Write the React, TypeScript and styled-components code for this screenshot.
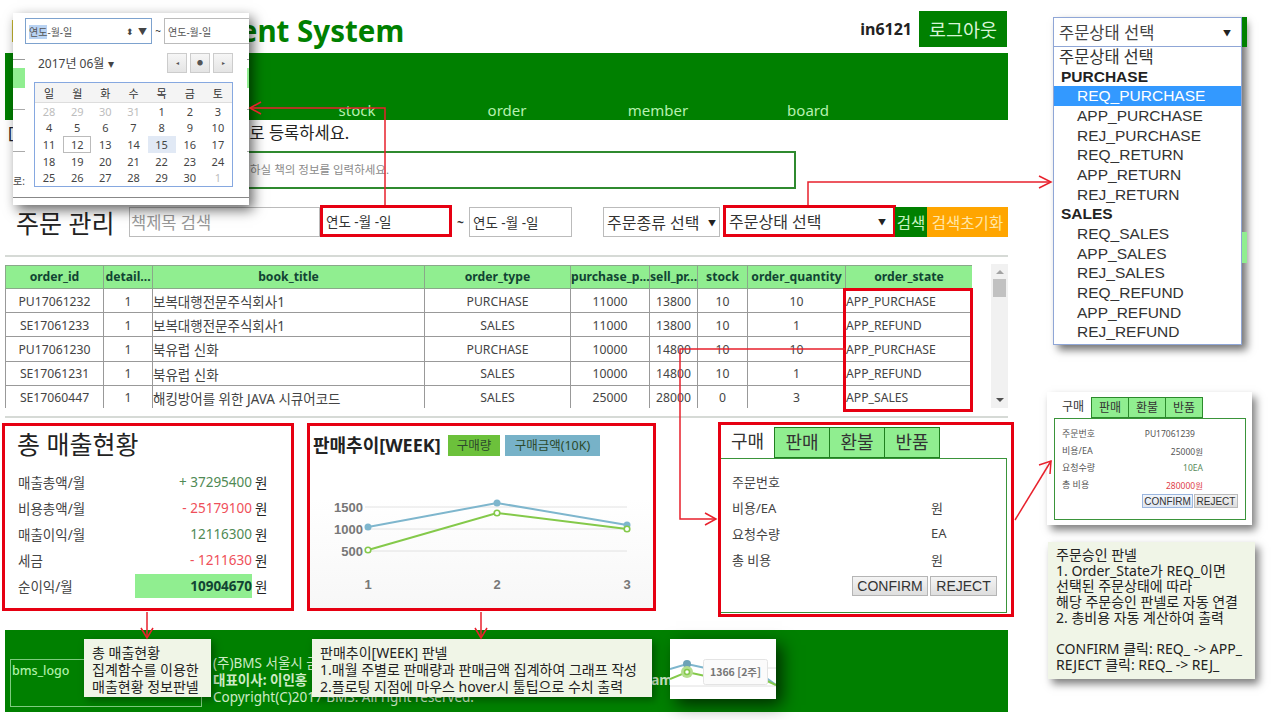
import styled, { createGlobalStyle } from 'styled-components';

const GlobalStyle = createGlobalStyle`
  html, body {
    margin: 0;
    padding: 0;
    background: #fff;
    font-family: "Noto Sans", "Noto Sans CJK KR", sans-serif;
    color: #333;
  }
  * { box-sizing: border-box; }
`;

const Page = styled.div`
  position: relative;
  width: 1280px;
  height: 720px;
  overflow: hidden;
`;

const Main = styled.div`
  width: 1003px;
  margin-left: 5px;
  display: flex;
  flex-direction: column;
`;

/* header */
const Header = styled.div`
  height: 53px;
  display: flex;
  align-items: center;
  justify-content: space-between;
  padding: 11px 1px 3px 5px;
`;
const Title = styled.h1`
  margin: 0;
  color: #008000;
  font-size: 29.5px;
  font-weight: 700;
  white-space: nowrap;
`;
const UserBox = styled.div`
  display: flex;
  align-items: center;
  gap: 7px;
  margin-top: -4px;
`;
const UserName = styled.span`
  font-size: 16px;
  font-weight: 700;
  color: #222;
`;
const LogoutButton = styled.button`
  width: 88px;
  height: 36px;
  border: 0;
  padding: 0;
  background: #008000;
  color: #d8f5d8;
  font: 18.5px "Noto Sans CJK KR", sans-serif;
`;

/* nav */
const Nav = styled.nav`
  height: 67px;
  background: #008000;
  display: grid;
  grid-template-columns: 282px 140px 160px 142px 158px;
  align-items: end;
`;
const NavItem = styled.a`
  justify-self: center;
  color: #b6f0b0;
  font-size: 15px;
  line-height: 18px;
  margin-bottom: 1px;
  &:first-child { grid-column: 2; }
`;

const Notice = styled.div`
  height: 31px;
  display: flex;
  padding-left: 3px;
  font-size: 16.5px;
  line-height: 26px;
  white-space: nowrap;
  color: #222;
`;
const NoticeTail = styled.span`
  margin-left: 236px;
`;
const BookInfoBox = styled.div`
  width: 781px;
  height: 38px;
  margin-left: 10px;
  border: 2px solid #2f8a2f;
  padding-left: 233px;
  font-size: 11.5px;
  line-height: 33px;
  color: #8a8a8a;
  white-space: nowrap;
`;

/* search */
const SearchRow = styled.div`
  display: flex;
  align-items: center;
  height: 30px;
  margin-top: 18px;
`;
const PageHeading = styled.h2`
  margin: 0;
  width: 124px;
  padding-left: 11px;
  font-size: 25px;
  font-weight: 400;
  color: #222;
  white-space: nowrap;
`;
const FieldBase = styled.div<{ $w: number; $highlight?: boolean; $ml?: number }>`
  width: ${p => p.$w}px;
  height: ${p => (p.$highlight ? 32 : 30)}px;
  margin-top: ${p => (p.$highlight ? -2 : 0)}px;
  margin-left: ${p => p.$ml ?? 0}px;
  border: ${p => (p.$highlight ? '3px solid #e60012' : '1px solid #bbb')};
  padding: 0 3px;
  display: flex;
  align-items: center;
  justify-content: space-between;
  font-size: 13.5px;
  white-space: nowrap;
  color: #333;
  flex-shrink: 0;
`;
const Placeholder = styled.span`
  margin-left: -2px;
  color: #999;
  font-size: 16.5px;
`;
const SelectText = styled.span`
  font-size: 16px;
  color: #333;
`;
const SelectCaret = styled.span<{ $pad: number }>`
  font-size: 8px;
  color: #222;
  padding-right: ${p => p.$pad}px;
`;
const Tilde = styled.span`
  width: 17px;
  text-align: center;
  font-size: 12px;
  font-weight: 700;
  flex-shrink: 0;
`;
const SearchButton = styled.button<{ $bg: string; $w: number; $fg: string; $ml?: number }>`
  width: ${p => p.$w}px;
  height: 30px;
  margin-left: ${p => p.$ml ?? 0}px;
  border: 0;
  padding: 0;
  background: ${p => p.$bg};
  color: ${p => p.$fg};
  font: 15.5px "Noto Sans CJK KR", sans-serif;
  white-space: nowrap;
  flex-shrink: 0;
`;

const Rule = styled.div<{ $top: number }>`
  height: 2px;
  margin-top: ${p => p.$top}px;
  background: #d6dad6;
`;

/* table */
const TableArea = styled.div`
  margin-top: 8px;
  display: flex;
  align-items: flex-start;
  height: 143px;
`;
const TableClip = styled.div`
  width: 968px;
  height: 143px;
  overflow: hidden;
`;
const OrderTable = styled.table`
  width: 967px;
  table-layout: fixed;
  border-collapse: collapse;
  font-size: 12px;
  color: #444;
`;
const HeadCell = styled.th`
  height: 23px;
  padding: 0 0 1px;
  background: #90ee90;
  border: 1px solid #8aa88a;
  font-size: 12.2px;
  font-weight: 700;
  color: #143;
  text-align: center;
  white-space: nowrap;
`;
const BodyCell = styled.td<{ $left?: boolean; $size: number }>`
  height: 24.2px;
  padding: 1px 0 0;
  border: 1px solid #999;
  font-size: ${p => p.$size}px;
  text-align: ${p => (p.$left ? 'left' : 'center')};
  white-space: nowrap;
  overflow: hidden;
`;
const Scrollbar = styled.div`
  width: 17px;
  height: 144px;
  margin-top: -1px;
  margin-left: 19px;
  background: #f1f1f1;
  display: flex;
  flex-direction: column;
  align-items: center;
`;
const ScrollArrow = styled.div<{ $down?: boolean }>`
  width: 0;
  height: 0;
  margin: ${p => (p.$down ? 'auto 0 6px' : '6px 0 5px')};
  border-left: 4px solid transparent;
  border-right: 4px solid transparent;
  ${p => (p.$down ? 'border-top: 4px solid #505050;' : 'border-bottom: 4px solid #a3a3a3;')}
`;
const ScrollThumb = styled.div`
  width: 13px;
  height: 18px;
  background: #c1c1c1;
`;

/* bottom panels */
const PanelRow = styled.div`
  display: flex;
  align-items: flex-start;
  margin: 5px 0 0 -3px;
`;
const Panel = styled.section<{ $w: number; $h: number; $ml?: number; $mt?: number }>`
  width: ${p => p.$w}px;
  height: ${p => p.$h}px;
  margin-left: ${p => p.$ml ?? 0}px;
  margin-top: ${p => p.$mt ?? 0}px;
  border: 3px solid #e60012;
  background: #fff;
  flex-shrink: 0;
`;
const SalesTitle = styled.h3`
  margin: 0 0 9px;
  height: 34px;
  padding-left: 12px;
  font-size: 25px;
  font-weight: 400;
  line-height: 36px;
  color: #222;
`;
const SalesRow = styled.div`
  display: grid;
  grid-template-columns: 117px 117px 1fr;
  height: 26px;
  padding-left: 13px;
  align-items: center;
  font-size: 13.5px;
  color: #444;
`;
const SalesValue = styled.span<{ $tone: string; $strong?: boolean }>`
  height: 24px;
  line-height: 24px;
  text-align: right;
  color: ${p => p.$tone};
  font-weight: ${p => (p.$strong ? 700 : 400)};
  background: ${p => (p.$strong ? '#90ee90' : 'transparent')};
`;
const WonUnit = styled.span`
  padding-left: 3px;
  color: #222;
`;

const TrendPanelBody = styled.div`
  height: 100%;
  background: linear-gradient(#fff 40%, #f7f7f7);
`;
const TrendHead = styled.div`
  height: 34px;
  padding: 9px 0 0 3px;
  display: flex;
  align-items: flex-start;
`;
const TrendTitle = styled.h3`
  margin: -3px 0 0;
  width: 135px;
  font-size: 18px;
  line-height: 26px;
  font-weight: 700;
  color: #222;
  white-space: nowrap;
`;
const LegendChip = styled.span<{ $bg: string; $w: number }>`
  width: ${p => p.$w}px;
  height: 21px;
  margin-right: 5px;
  background: ${p => p.$bg};
  font-size: 12.5px;
  line-height: 21px;
  text-align: center;
  color: #2d4a2d;
  white-space: nowrap;
`;
const ChartSvg = styled.svg`
  display: block;
`;

const TabBar = styled.div`
  display: flex;
  height: 31px;
  margin-top: 2px;
`;
const Tab = styled.div<{ $active?: boolean; $w: number }>`
  width: ${p => p.$w}px;
  text-align: center;
  font-size: 18px;
  line-height: 28px;
  color: #333;
  background: ${p => (p.$active ? '#fff' : '#90ee90')};
  border: ${p => (p.$active ? '0' : '1px solid #1f7f1f')};
  margin-left: ${p => (p.$active ? 0 : -1)}px;
  &:nth-child(2) { margin-left: 0; }
`;
const TabBody = styled.div`
  width: 286px;
  height: 155px;
  border: 1px solid #3a943a;
  border-left: 0;
  padding-top: 9px;
`;
const ApproveRow = styled.div`
  height: 26px;
  display: grid;
  grid-template-columns: 199px 1fr;
  padding-left: 11px;
  align-items: center;
  font-size: 13px;
  color: #444;
`;
const ButtonRow = styled.div`
  display: flex;
  justify-content: flex-end;
  gap: 2px;
  padding-right: 9px;
  margin-top: 4px;
`;
const GrayButton = styled.button<{ $w: number }>`
  width: ${p => p.$w}px;
  height: 20px;
  padding: 0;
  border: 1px solid #b5b5b5;
  background: linear-gradient(#f4f4f4, #dedede);
  color: #333;
  font: 14px "Liberation Sans", sans-serif;
`;

/* footer */
const Footer = styled.footer`
  margin-top: 13px;
  height: 82px;
  background: #008000;
  padding: 25px 0 0 5px;
  display: flex;
  gap: 11px;
  align-items: flex-start;
`;
const LogoBox = styled.div`
  width: 192px;
  height: 48px;
  margin-top: 4px;
  border: 1px solid #7fcb7f;
  padding-left: 1px;
  font-size: 12.5px;
  font-weight: 500;
  line-height: 22px;
  color: #aef0a8;
`;
const FooterInfo = styled.div`
  font-size: 13.5px;
  line-height: 17px;
  color: #cdebc6;
  white-space: nowrap;
`;
const FooterStrong = styled.span`
  font-weight: 700;
`;
const FooterGap = styled.span`
  margin-left: 344px;
  font-weight: 700;
`;

/* overlays */
const Connectors = styled.svg`
  position: absolute;
  inset: 0;
  z-index: 6;
  pointer-events: none;
`;
const StateHighlight = styled.div`
  position: absolute;
  left: 843px;
  top: 288px;
  width: 130px;
  height: 124px;
  border: 3px solid #e60012;
  z-index: 2;
`;

const CalendarPopup = styled.div`
  position: absolute;
  left: 13px;
  top: 13px;
  width: 236px;
  height: 192px;
  z-index: 5;
  overflow: hidden;
  box-shadow: 4px 5px 12px rgba(0, 0, 0, 0.6);
  background:
    linear-gradient(#9a9a9a, #9a9a9a) 0 46px / 100% 1px no-repeat,
    linear-gradient(#90ee90, #90ee90) 0 55px / 100% 20px no-repeat,
    linear-gradient(#aaa, #aaa) 0 96px / 100% 1px no-repeat,
    linear-gradient(#aaa, #aaa) 0 138px / 100% 1px no-repeat,
    linear-gradient(#888, #888) 0 184px / 100% 1px no-repeat,
    #fff;
`;
const FragmentText = styled.span`
  position: absolute;
  left: 0;
  top: 160px;
  font-size: 10px;
  color: #444;
`;
const CalendarDates = styled.div`
  position: relative;
  display: flex;
  align-items: center;
  margin: 5px 0 0 12px;
  height: 26px;
  width: 240px;
`;
const CalendarInput = styled.div<{ $focus?: boolean; $w: number }>`
  width: ${p => p.$w}px;
  height: 26px;
  background: #fff;
  border: 1px solid ${p => (p.$focus ? '#7da2ce' : '#bbb')};
  padding: 0 3px;
  display: flex;
  align-items: center;
  justify-content: space-between;
  font-size: 10px;
  color: #555;
  white-space: nowrap;
  flex-shrink: 0;
`;
const YearSelected = styled.span`
  background: #b9d3f3;
`;
const Spinner = styled.span`
  font-size: 9px;
  color: #444;
  letter-spacing: 1px;
`;
const CalendarTilde = styled.span`
  width: 12px;
  text-align: center;
  font-size: 10px;
  background: #fff;
  flex-shrink: 0;
`;
const CalendarBody = styled.div`
  position: relative;
  width: 222px;
  height: 153px;
  margin-left: 12px;
  background: #fff;
  padding: 9px 14px 0 9px;
`;
const CalendarHead = styled.div`
  height: 20px;
  display: flex;
  align-items: center;
  justify-content: space-between;
  padding-left: 4px;
  font-size: 12px;
  color: #444;
`;
const CalendarNav = styled.div`
  display: flex;
  gap: 3px;
`;
const CalendarNavButton = styled.div`
  width: 20px;
  height: 20px;
  border: 1px solid #ccc;
  background: linear-gradient(#f6f6f6, #e4e4e4);
  font-size: 6px;
  line-height: 18px;
  text-align: center;
  color: #555;
`;
const CalendarGrid = styled.div`
  margin-top: 9px;
  border: 1.5px solid #86a8e0;
  height: 105px;
  display: grid;
  grid-template-columns: repeat(7, 1fr);
  grid-template-rows: 20px repeat(5, 16.6px);
  font-size: 11px;
`;
const WeekDay = styled.div`
  display: flex;
  align-items: center;
  justify-content: center;
  background: #f4f4f4;
  border-bottom: 1px solid #ddd;
  color: #333;
`;
const DayCell = styled.div<{ $muted?: boolean; $today?: boolean; $picked?: boolean }>`
  display: flex;
  align-items: center;
  justify-content: center;
  color: ${p => (p.$muted ? '#bdbdbd' : '#444')};
  background: ${p => (p.$picked ? '#e1e9f5' : 'transparent')};
  border: ${p => (p.$today ? '1px solid #bbb' : '0')};
`;

const OrderStateMenu = styled.div`
  position: absolute;
  left: 1053px;
  top: 17px;
  width: 189px;
  height: 328px;
  z-index: 5;
  background: #fff;
  border: 1px solid #8fa6d6;
  box-shadow: 5px 5px 8px rgba(0, 0, 0, 0.55);
`;
const MenuSelect = styled.div`
  height: 29px;
  border-bottom: 1px solid #8fa6d6;
  padding: 0 5px;
  display: flex;
  align-items: center;
  justify-content: space-between;
  font-size: 16.5px;
  color: #444;
`;
const MenuSliver = styled.div<{ $top: number; $h: number; $bg: string }>`
  position: absolute;
  left: 188px;
  top: ${p => p.$top}px;
  width: 5px;
  height: ${p => p.$h}px;
  background: ${p => p.$bg};
`;
const MenuOption = styled.div<{ $group?: boolean; $sel?: boolean; $plain?: boolean }>`
  height: 19.66px;
  line-height: 19.66px;
  padding-left: ${p => (p.$group ? 7 : p.$plain ? 5 : 23)}px;
  font-family: ${p => (p.$plain ? '"Noto Sans CJK KR", sans-serif' : '"Liberation Sans", sans-serif')};
  font-size: ${p => (p.$plain ? 16.5 : 15.5)}px;
  font-weight: ${p => (p.$group ? 700 : 400)};
  color: ${p => (p.$sel ? '#fff' : p.$group ? '#222' : '#333')};
  background: ${p => (p.$sel ? '#3399ff' : 'transparent')};
`;

const MiniPanel = styled.div`
  position: absolute;
  left: 1047px;
  top: 392px;
  width: 205px;
  height: 133px;
  z-index: 4;
  background: #fff;
  padding: 5px 6px 0 7px;
  box-shadow: 4px 5px 8px rgba(0, 0, 0, 0.5);
`;
const MiniTabs = styled.div`
  display: flex;
  height: 21px;
`;
const MiniTab = styled.div<{ $active?: boolean }>`
  width: 38px;
  text-align: center;
  font-size: 12px;
  line-height: 19px;
  color: #333;
  background: ${p => (p.$active ? '#fff' : '#90ee90')};
  border: ${p => (p.$active ? '0' : '1px solid #2c8a2c')};
  margin-left: ${p => (p.$active ? 0 : -1)}px;
`;
const MiniBody = styled.div`
  width: 192px;
  height: 102px;
  border: 1px solid #3a943a;
  padding: 6px 7px 0 7px;
`;
const MiniRow = styled.div`
  height: 17px;
  display: flex;
  justify-content: space-between;
  align-items: center;
  padding-right: 35px;
  font-size: 9px;
  color: #555;
`;
const MiniValue = styled.span<{ $tone?: string; $inset?: number }>`
  color: ${p => p.$tone ?? '#555'};
  font-size: 8.5px;
  margin-right: ${p => p.$inset ?? 0}px;
`;
const MiniButtons = styled.div`
  display: flex;
  justify-content: flex-end;
  gap: 1px;
  margin-top: 1px;
`;
const MiniButton = styled.button<{ $w: number; $focus?: boolean }>`
  width: ${p => p.$w}px;
  height: 14px;
  padding: 0;
  border: 1px solid ${p => (p.$focus ? '#9bb6de' : '#bbb')};
  background: ${p => (p.$focus ? 'linear-gradient(#f2f6fc, #dfe6f2)' : 'linear-gradient(#f4f4f4, #ddd)')};
  color: #333;
  font: 10px "Liberation Sans", sans-serif;
`;

const Note = styled.div<{ $x: number; $y: number; $w: number; $h: number; $lh: number; $shadow?: boolean }>`
  position: absolute;
  left: ${p => p.$x}px;
  top: ${p => p.$y}px;
  width: ${p => p.$w}px;
  height: ${p => p.$h}px;
  z-index: 4;
  background: #f0f5e7;
  padding: 5px 8px;
  font-size: 14px;
  line-height: ${p => p.$lh}px;
  color: #222;
  white-space: pre;
  box-shadow: ${p => (p.$shadow ? '4px 5px 8px rgba(0, 0, 0, 0.5)' : '3px 3px 8px rgba(0, 0, 0, 0.35)')};
`;
const ChartCrop = styled.svg`
  position: absolute;
  left: 670px;
  top: 639px;
  z-index: 4;
  background: #fff;
  box-shadow: 6px 6px 16px rgba(0, 0, 0, 0.65);
`;

const ORDERS = [
  ['PU17061232', '1', '보복대행전문주식회사1', 'PURCHASE', '11000', '13800', '10', '10', 'APP_PURCHASE'],
  ['SE17061233', '1', '보복대행전문주식회사1', 'SALES', '11000', '13800', '10', '1', 'APP_REFUND'],
  ['PU17061230', '1', '북유럽 신화', 'PURCHASE', '10000', '14800', '10', '10', 'APP_PURCHASE'],
  ['SE17061231', '1', '북유럽 신화', 'SALES', '10000', '14800', '10', '1', 'APP_REFUND'],
  ['SE17060447', '1', '해킹방어를 위한 JAVA 시큐어코드', 'SALES', '25000', '28000', '0', '3', 'APP_SALES'],
];
const COLUMNS: [string, number][] = [
  ['order_id', 98],
  ['detail...', 49],
  ['book_title', 272],
  ['order_type', 146],
  ['purchase_p...', 79],
  ['sell_pr...', 48],
  ['stock', 50],
  ['order_quantity', 98],
  ['order_state', 127],
];
const SALES = [
  ['매출총액/월', '+ 37295400', '#4f8a55'],
  ['비용총액/월', '- 25179100', '#ef4f5a'],
  ['매출이익/월', '12116300', '#4f8a55'],
  ['세금', '- 1211630', '#ef4f5a'],
];
const DAYS = [28, 29, 30, 31, 1, 2, 3, 4, 5, 6, 7, 8, 9, 10, 11, 12, 13, 14, 15, 16, 17, 18, 19, 20, 21, 22, 23, 24, 25, 26, 27, 28, 29, 30, 1];
const STATE_GROUPS: [string, string[]][] = [
  ['PURCHASE', ['REQ_PURCHASE', 'APP_PURCHASE', 'REJ_PURCHASE', 'REQ_RETURN', 'APP_RETURN', 'REJ_RETURN']],
  ['SALES', ['REQ_SALES', 'APP_SALES', 'REJ_SALES', 'REQ_REFUND', 'APP_REFUND', 'REJ_REFUND']],
];

const TrendChart = () => (
  <ChartSvg width="343" height="148" viewBox="0 0 343 148">
    {[47, 69, 91].map(y => (
      <line key={y} x1="55" x2="317" y1={y} y2={y} stroke="#e2e2e2" strokeWidth="1" />
    ))}
    <g fontFamily='"Liberation Sans", sans-serif' fontSize="13" fontWeight="700" fill="#777">
      <text x="53" y="52" textAnchor="end">1500</text>
      <text x="53" y="74" textAnchor="end">1000</text>
      <text x="53" y="96" textAnchor="end">500</text>
      <text x="58" y="129" textAnchor="middle">1</text>
      <text x="187" y="129" textAnchor="middle">2</text>
      <text x="317" y="129" textAnchor="middle">3</text>
    </g>
    <polyline points="58,67 187,43 317,65" fill="none" stroke="#7eb6cd" strokeWidth="2" />
    <circle cx="58" cy="67" r="3.5" fill="#7eb6cd" />
    <circle cx="187" cy="43" r="3.5" fill="#7eb6cd" />
    <circle cx="317" cy="65" r="3.5" fill="#7eb6cd" />
    <polyline points="58,90 187,53 317,69" fill="none" stroke="#84c94a" strokeWidth="2" />
    <circle cx="58" cy="90" r="2.8" fill="#fff" stroke="#84c94a" strokeWidth="1.6" />
    <circle cx="187" cy="53" r="2.8" fill="#fff" stroke="#84c94a" strokeWidth="1.6" />
    <circle cx="317" cy="69" r="2.8" fill="#fff" stroke="#84c94a" strokeWidth="1.6" />
  </ChartSvg>
);

const App = () => {
  return (
    <Page>
      <GlobalStyle />
      <Main>
        <Header>
          <Title>Book Management System</Title>
          <UserBox>
            <UserName>in6121</UserName>
            <LogoutButton>로그아웃</LogoutButton>
          </UserBox>
        </Header>
        <Nav>
          <NavItem>stock</NavItem>
          <NavItem>order</NavItem>
          <NavItem>member</NavItem>
          <NavItem>board</NavItem>
        </Nav>
        <Notice>[<NoticeTail>로 등록하세요.</NoticeTail></Notice>
        <BookInfoBox>하실 책의 정보를 입력하세요.</BookInfoBox>

        <SearchRow>
          <PageHeading>주문 관리</PageHeading>
          <FieldBase $w={191}><Placeholder>책제목 검색</Placeholder></FieldBase>
          <FieldBase $w={132} $highlight>연도 -월 -일</FieldBase>
          <Tilde>~</Tilde>
          <FieldBase $w={103}>연도 -월 -일</FieldBase>
          <FieldBase $w={117} $ml={31}>
            <SelectText>주문종류 선택</SelectText><SelectCaret $pad={0}>▼</SelectCaret>
          </FieldBase>
          <FieldBase $w={173} $highlight $ml={3}>
            <SelectText>주문상태 선택</SelectText><SelectCaret $pad={4}>▼</SelectCaret>
          </FieldBase>
          <SearchButton $bg="#008000" $fg="#c8f5c0" $w={32} $ml={-1}>검색</SearchButton>
          <SearchButton $bg="#ffa500" $fg="#ffe6a8" $w={81}>검색초기화</SearchButton>
        </SearchRow>

        <Rule $top={18} />

        <TableArea>
          <TableClip>
            <OrderTable>
              <colgroup>
                {COLUMNS.map(([name, w]) => <col key={name} width={w} />)}
              </colgroup>
              <thead>
                <tr>
                  {COLUMNS.map(([name]) => <HeadCell key={name}>{name}</HeadCell>)}
                </tr>
              </thead>
              <tbody>
                {ORDERS.map(row => (
                  <tr key={row[0]}>
                    {row.map((cell, i) => (
                      <BodyCell key={i} $left={i === 2 || i === 8} $size={i === 2 ? 13.5 : 12.2}>{cell}</BodyCell>
                    ))}
                  </tr>
                ))}
              </tbody>
            </OrderTable>
          </TableClip>
          <Scrollbar>
            <ScrollArrow />
            <ScrollThumb />
            <ScrollArrow $down />
          </Scrollbar>
        </TableArea>

        <Rule $top={8} />

        <PanelRow>
          <Panel $w={292} $h={188}>
            <SalesTitle>총 매출현황</SalesTitle>
            {SALES.map(([label, value, tone]) => (
              <SalesRow key={label}>
                <span>{label}</span>
                <SalesValue $tone={tone}>{value}</SalesValue>
                <WonUnit>원</WonUnit>
              </SalesRow>
            ))}
            <SalesRow>
              <span>순이익/월</span>
              <SalesValue $tone="#143" $strong>10904670</SalesValue>
              <WonUnit>원</WonUnit>
            </SalesRow>
          </Panel>

          <Panel $w={349} $h={188} $ml={13}>
            <TrendPanelBody>
              <TrendHead>
                <TrendTitle>판매추이[WEEK]</TrendTitle>
                <LegendChip $bg="#6cc13b" $w={52}>구매량</LegendChip>
                <LegendChip $bg="#77b2c8" $w={95}>구매금액(10K)</LegendChip>
              </TrendHead>
              <TrendChart />
            </TrendPanelBody>
          </Panel>

          <Panel $w={296} $h={195} $ml={62} $mt={-1}>
            <TabBar>
              <Tab $active $w={53}>구매</Tab>
              <Tab $w={56}>판매</Tab>
              <Tab $w={56}>환불</Tab>
              <Tab $w={56}>반품</Tab>
            </TabBar>
            <TabBody>
              <ApproveRow><span>주문번호</span><span /></ApproveRow>
              <ApproveRow><span>비용/EA</span><span>원</span></ApproveRow>
              <ApproveRow><span>요청수량</span><span>EA</span></ApproveRow>
              <ApproveRow><span>총 비용</span><span>원</span></ApproveRow>
              <ButtonRow>
                <GrayButton $w={76}>CONFIRM</GrayButton>
                <GrayButton $w={67}>REJECT</GrayButton>
              </ButtonRow>
            </TabBody>
          </Panel>
        </PanelRow>

        <Footer>
          <LogoBox>bms_logo</LogoBox>
          <FooterInfo>
            <div>(주)BMS 서울시 금</div>
            <div><FooterStrong>대표이사: 이인홍</FooterStrong><FooterGap>am:</FooterGap></div>
            <div>Copyright(C)2017 BMS. All right reserved.</div>
          </FooterInfo>
        </Footer>
      </Main>

      <StateHighlight />

      <Connectors width="1280" height="720" viewBox="0 0 1280 720" fill="none" stroke="#e8212c" strokeWidth="1.5">
        <polyline points="385,205 385,108 250,108" />
        <polyline points="261,102 250,108 261,114" />
        <polyline points="808,205 808,182 1051,182" />
        <polyline points="1039,176 1051,182 1039,188" />
        <polyline points="845,349 680,349 680,519 716,519" />
        <polyline points="705,513 716,519 705,525" />
        <polyline points="1015,520 1051,461" />
        <polyline points="1039,465 1051,461 1050,474" />
        <polyline points="147,612 147,638" />
        <polyline points="141,628 147,638 153,628" />
        <polyline points="481,612 481,638" />
        <polyline points="475,628 481,638 487,628" />
      </Connectors>

      <CalendarPopup>
        <FragmentText>로:</FragmentText>
        <CalendarDates>
          <CalendarInput $focus $w={127}>
            <span><YearSelected>연도</YearSelected>-월-일</span>
            <Spinner>⬍ ▼</Spinner>
          </CalendarInput>
          <CalendarTilde>~</CalendarTilde>
          <CalendarInput $w={90}>연도-월-일</CalendarInput>
        </CalendarDates>
        <CalendarBody>
          <CalendarHead>
            <span>2017년 06월 ▾</span>
            <CalendarNav>
              <CalendarNavButton>◂</CalendarNavButton>
              <CalendarNavButton>●</CalendarNavButton>
              <CalendarNavButton>▸</CalendarNavButton>
            </CalendarNav>
          </CalendarHead>
          <CalendarGrid>
            {['일', '월', '화', '수', '목', '금', '토'].map(d => <WeekDay key={d}>{d}</WeekDay>)}
            {DAYS.map((d, i) => (
              <DayCell key={i} $muted={i < 4 || i === 34} $today={i === 15} $picked={i === 18}>{d}</DayCell>
            ))}
          </CalendarGrid>
        </CalendarBody>
      </CalendarPopup>

      <OrderStateMenu>
        <MenuSliver $top={-1} $h={30} $bg="#008000" />
        <MenuSliver $top={214} $h={31} $bg="#90ee90" />
        <MenuSelect>주문상태 선택<SelectCaret $pad={5}>▼</SelectCaret></MenuSelect>
        <MenuOption $plain>주문상태 선택</MenuOption>
        {STATE_GROUPS.map(([group, items]) => (
          <div key={group}>
            <MenuOption $group>{group}</MenuOption>
            {items.map(item => (
              <MenuOption key={item} $sel={item === 'REQ_PURCHASE'}>{item}</MenuOption>
            ))}
          </div>
        ))}
      </OrderStateMenu>

      <MiniPanel>
        <MiniTabs>
          <MiniTab $active>구매</MiniTab>
          <MiniTab>판매</MiniTab>
          <MiniTab>환불</MiniTab>
          <MiniTab>반품</MiniTab>
        </MiniTabs>
        <MiniBody>
          <MiniRow><span>주문번호</span><MiniValue $inset={8}>PU17061239</MiniValue></MiniRow>
          <MiniRow><span>비용/EA</span><MiniValue>25000원</MiniValue></MiniRow>
          <MiniRow><span>요청수량</span><MiniValue $tone="#5a8a5a">10EA</MiniValue></MiniRow>
          <MiniRow><span>총 비용</span><MiniValue $tone="#e0404a">280000원</MiniValue></MiniRow>
          <MiniButtons>
            <MiniButton $w={51} $focus>CONFIRM</MiniButton>
            <MiniButton $w={44}>REJECT</MiniButton>
          </MiniButtons>
        </MiniBody>
      </MiniPanel>

      <Note $x={1048} $y={542} $w={207} $h={137} $lh={15.7} $shadow>
        {'주문승인 판넬\n1. Order_State가 REQ_이면\n선택된 주문상태에 따라\n해당 주문승인 판넬로 자동 연결\n2. 총비용 자동 계산하여 출력\n\nCONFIRM 클릭: REQ_ -> APP_\nREJECT 클릭: REQ_ -> REJ_'}
      </Note>
      <Note $x={84} $y={639} $w={127} $h={58} $lh={17}>
        {'총 매출현황\n집계함수를 이용한\n매출현황 정보판넬'}
      </Note>
      <Note $x={312} $y={639} $w={340} $h={58} $lh={17}>
        {'판매추이[WEEK] 판넬\n1.매월 주별로 판매량과 판매금액 집계하여 그래프 작성\n2.플로팅 지점에 마우스 hover시 툴팁으로 수치 출력'}
      </Note>
      <ChartCrop width="106" height="60" viewBox="0 0 106 60">
        <line x1="0" x2="106" y1="47" y2="47" stroke="#e0e0e0" />
        <line x1="90" x2="106" y1="29" y2="29" stroke="#e0e0e0" />
        <polyline points="0,30 17,25 40,30" fill="none" stroke="#7eb6cd" strokeWidth="2" />
        <polyline points="95,38 106,46" fill="none" stroke="#7eb6cd" strokeWidth="2" />
        <polyline points="0,40 17,33 40,38" fill="none" stroke="#84c94a" strokeWidth="2" />
        <polyline points="95,41 106,46" fill="none" stroke="#84c94a" strokeWidth="2" />
        <circle cx="17" cy="25" r="4" fill="#6da2b6" />
        <circle cx="17" cy="33" r="6" fill="#b5de8f" />
        <circle cx="17" cy="33" r="2.5" fill="#fff" stroke="#84c94a" strokeWidth="1.5" />
        <rect x="33.5" y="20.5" width="64" height="25" rx="2" fill="#fbfbfb" stroke="#e4e4e4" />
        <text x="65.5" y="37" textAnchor="middle" fontSize="10.5" fontWeight="700" fill="#777" fontFamily='"Noto Sans CJK KR", sans-serif'>1366 [2주]</text>
      </ChartCrop>
    </Page>
  );
};

export default App;
